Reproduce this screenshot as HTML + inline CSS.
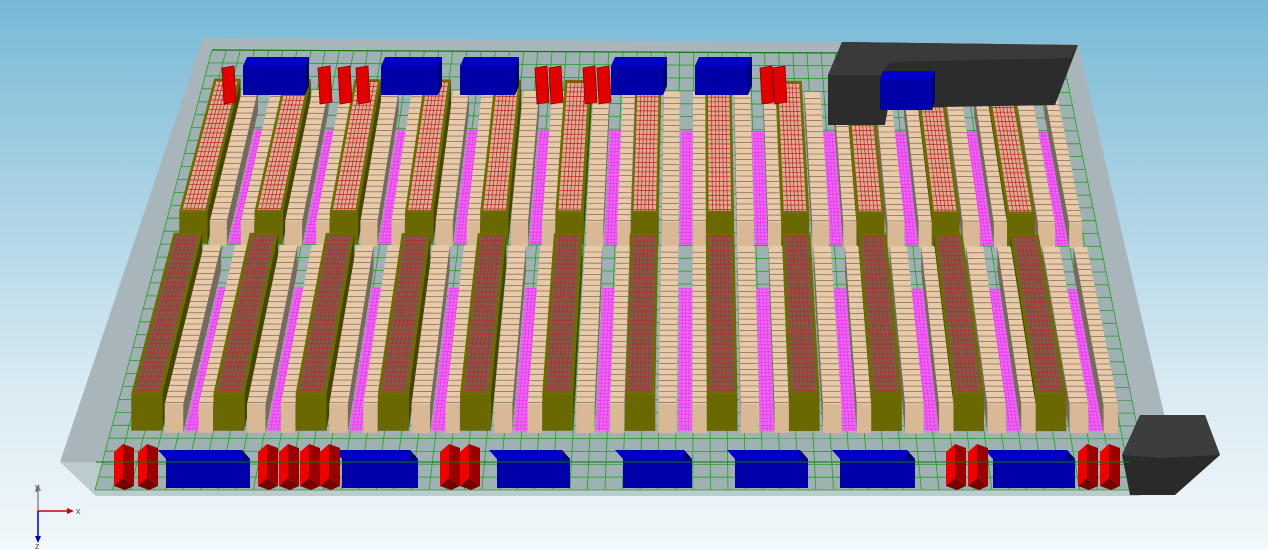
<!DOCTYPE html>
<html><head><meta charset="utf-8"><style>
html,body{margin:0;padding:0;width:1268px;height:549px;overflow:hidden}
body{background:linear-gradient(180deg,#78b9d6 0%,#a9d2e4 35%,#d8eaf2 70%,#f2f8fb 100%);font-family:"Liberation Sans",sans-serif}
svg{position:absolute;left:0;top:0}
</style></head><body>
<svg id="s" width="1268" height="549" viewBox="0 0 1268 549" xmlns="http://www.w3.org/2000/svg">
<polygon points="203,38 1078,44 1165,418 1130,462 60,462" fill="#a8b6bb"/>
<polygon points="60,462 1130,462 1140,496 96,496" fill="#bccbd0"/>
<g id="g"></g>
<g font-size="9" fill="#555">
<line x1="38" y1="511" x2="38" y2="487" stroke="#888" stroke-width="1.5"/>
<line x1="38" y1="511" x2="70" y2="511" stroke="#c00" stroke-width="1.5"/>
<polygon points="74,511 67,508 67,514" fill="#c00"/>
<line x1="38" y1="511" x2="38" y2="538" stroke="#0000b0" stroke-width="1.5"/>
<polygon points="38,543 35,536 41,536" fill="#0000b0"/>
<polygon points="38,484 35,491 41,491" fill="#888"/>
<text x="35" y="490">y</text><text x="76" y="514">x</text><text x="35" y="549">z</text>
</g>
</svg>
<script>
const g=document.getElementById('g');
let out=[];
function poly(pts,fill,stroke,sw){out.push(`<polygon points="${pts.map(p=>p[0].toFixed(1)+','+p[1].toFixed(1)).join(' ')}" fill="${fill}"${stroke?` stroke="${stroke}" stroke-width="${sw||0.6}"`:''}/>`);}
function line(a,b,c,w){out.push(`<line x1="${a[0].toFixed(1)}" y1="${a[1].toFixed(1)}" x2="${b[0].toFixed(1)}" y2="${b[1].toFixed(1)}" stroke="${c}" stroke-width="${w||0.7}"/>`);}
function F(u,v){const x=(1-v)*((1-u)*212+u*1062)+v*((1-u)*95+u*1150);const y=(1-v)*((1-u)*50+u*54)+v*490;return [x,y];}
function P(u,v,h){const p=F(u,v);return [p[0],p[1]-h*(0.8+0.35*v)];}
poly([F(0,0),F(1,0),F(1,1),F(0,1)],"#9fb1b3");
for(let i=0;i<=60;i++){line(F(i/60,0),F(i/60,1),"#22a022",0.8);}
for(let j=0;j<=34;j++){line(F(0,j/34),F(1,j/34),"#22a022",0.8);}
line(F(0,0),F(1,0),"#0a7a0a",1.2);
function box(u0,u1,v0,v1,h,ct,cf,cs){
  const side=(u0+u1)/2<0.5?u1:u0;
  poly([P(side,v0,0),P(side,v1,0),P(side,v1,h),P(side,v0,h)],cs);
  poly([P(u0,v1,0),P(u1,v1,0),P(u1,v1,h),P(u0,v1,h)],cf);
  poly([P(u0,v0,h),P(u1,v0,h),P(u1,v1,h),P(u0,v1,h)],ct);
}
function rows(v0,v1,inner,lines){
  const items=[];
  for(let m=0;m<12;m++){
    const b=0.02+m*0.08;
    items.push({t:'m',u0:b+0.052,u1:b+0.066});
    items.push({t:'o',u0:b,u1:b+0.03});
    items.push({t:'t',u0:b+0.033,u1:b+0.051});
    items.push({t:'t',u0:b+0.066,u1:b+0.08});
  }
  items.sort((a,c)=>Math.abs((c.u0+c.u1)/2-0.5)-Math.abs((a.u0+a.u1)/2-0.5));
  items.filter(i=>i.t=='m').forEach(i=>{
    const a=v0+0.05,bb=v1;
    poly([P(i.u0,a,0),P(i.u1,a,0),P(i.u1,bb,0),P(i.u0,bb,0)],"#e070e8");
    for(let k=1;k<4;k++){const u=i.u0+(i.u1-i.u0)*k/4;line(P(u,a,0),P(u,bb,0),"#ff20ff",0.6);}
    for(let v=a;v<bb;v+=0.008)line(P(i.u0,v,0),P(i.u1,v,0),"#ff20ff",0.6);
  });
  items.filter(i=>i.t!='m').forEach(i=>{
    if(i.t=='o'){
      box(i.u0,i.u1,v0,v1,34,"#6e6c00","#6a6800","#464500");
      const a=i.u0+0.003,c=i.u1-0.003,va=v0+0.006,vb=v1-0.004,h=34;
      poly([P(a,va,h),P(c,va,h),P(c,vb,h),P(a,vb,h)],inner);
      for(let k=1;k<6;k++){const u=a+(c-a)*k/6;line(P(u,va,h),P(u,vb,h),lines,0.7);}
      for(let v=va;v<vb;v+=0.011)line(P(a,v,h),P(c,v,h),lines,0.7);
    } else {
      box(i.u0,i.u1,v0+0.01,v1+0.005,26,"#e8c9a8","#d9b896","#76695d");
      for(let v=v0+0.025;v<v1+0.005;v+=0.013)line(P(i.u0,v,26),P(i.u1,v,26),"#6a5a4a",0.6);
    }
  });
}
rows(0.13,0.44,"#dcae98","#c0201a");
rows(0.49,0.865,"#7c5a4e","#c02a22");
function sb(x0,x1,yt,yb,col,top,side,d){
  poly([[x0,yt],[x1,yt],[x1+d,yt-9],[x0+d,yt-9]],top);
  poly([[x1,yt],[x1+d,yt-9],[x1+d,yb-9],[x1,yb]],side);
  poly([[x0,yt],[x1,yt],[x1,yb],[x0,yb]],col);
}
function red(x,yt,yb){poly([[x,yt],[x+9,yt-8],[x+9,yb-8],[x,yb]],"#ee0000");poly([[x+9,yt-8],[x+20,yt-4],[x+20,yb],[x+9,yb-8]],"#9a0000");poly([[x,yb],[x+9,yb-8],[x+20,yb],[x+11,yb+4]],"#700");}
[[243,305],[381,438],[460,515],[611,663],[695,748]].forEach(b=>sb(b[0],b[1],66,95,"#0000a8","#0000c8","#000070",4));
[222,318,338,356,535,549,583,597,760,773].forEach(x=>poly([[x,68],[x+12,66],[x+14,102],[x+2,104]],"#e00000","#900000",0.8));
poly([[842,42],[1078,45],[1055,105],[888,108],[885,125],[828,125],[828,75]],"#2c2c2c");
poly([[842,42],[1078,45],[1070,58],[890,62],[880,75],[828,75]],"#3a3a3a");
sb(880,932,80,110,"#0000a8","#0000c8","#000070",3);
[[166,250],[342,418],[497,570],[623,692],[735,808],[840,915],[993,1075]].forEach(b=>sb(b[0],b[1],459,488,"#0000a8","#0000c4","#000070",-8));
[114,138,258,279,300,320,440,460,946,968,1078,1100].forEach(x=>red(x,452,486));
poly([[1140,415],[1205,415],[1220,455],[1175,495],[1130,495],[1122,455]],"#2a2a2a");
poly([[1140,415],[1205,415],[1220,455],[1160,458],[1122,455]],"#3d3d3d");
line([96,462],[1130,462],"#0a7a0a",1);
g.innerHTML=out.join('');
</script>
</body></html>
